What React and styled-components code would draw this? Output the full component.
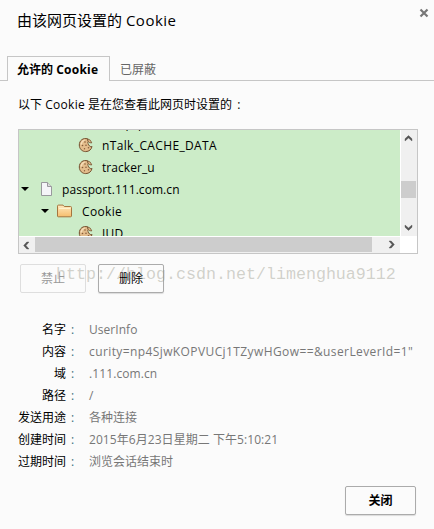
import React from 'react';
import styled, { createGlobalStyle } from 'styled-components';

const GlobalStyle = createGlobalStyle`
  * { box-sizing: border-box; }
  body {
    margin: 0;
    background: #fbfbfb;
    color: #000;
    font: 12px/22px "Open Sans", "Noto Sans CJK SC", sans-serif;
  }
`;

const Dialog = styled.main`
  position: relative;
  width: 434px;
  height: 529px;
  overflow: hidden;
  background: #fbfbfb;
  display: flex;
  flex-direction: column;
`;

const Header = styled.header`
  display: flex;
  justify-content: space-between;
  height: 56px;
  padding: 8px 5px 0 17px;
`;

const Title = styled.h1`
  margin: 0;
  font-size: 15px;
  font-weight: 400;
  line-height: 25px;
  white-space: pre;
`;

const CloseIcon = styled.button`
  width: 10px;
  height: 10px;
  padding: 0;
  border: 0;
  background: none;
  svg { display: block; }
`;

const Tabs = styled.nav`
  display: flex;
  height: 25px;
  padding-left: 7px;
  box-shadow: inset 0 -1px #c6c6c6;
`;

const Tab = styled.button`
  width: ${p => (p.$active ? 103 : 60)}px;
  height: 25px;
  padding: 2px 0 0 ${p => (p.$active ? 9 : 10)}px;
  border: ${p => (p.$active ? '1px solid #c6c6c6' : '0')};
  border-bottom: 0;
  background: ${p => (p.$active ? '#fbfbfb' : 'transparent')};
  color: ${p => (p.$active ? '#000' : '#666')};
  font: ${p => (p.$active ? 700 : 400)} 12px/22px "Open Sans", "Noto Sans CJK SC", sans-serif;
  text-align: left;
  white-space: nowrap;
`;

const Latin = styled.span`
  letter-spacing: ${p => p.$gap || 0}px;
`;

const Intro = styled.p`
  margin: 13px 0 0 18px;
  height: 35px;
  white-space: nowrap;
`;

const Colon = styled.span`
  margin-left: 2px;
`;

const TreeFrame = styled.section`
  display: grid;
  grid-template: 107px 16px / 382px 16px;
  width: 400px;
  height: 125px;
  margin-left: 18px;
  border: 1px solid #c6c6c6;
  background: #fff;
`;

const Tree = styled.div`
  width: 381px;
  height: 106px;
  overflow: hidden;
  background: #ccecc8;
`;

const TreeList = styled.div`
  margin-top: -17px;
`;

const TreeRow = styled.div`
  display: flex;
  align-items: center;
  height: 22px;
  padding-left: ${p => p.$indent}px;
  white-space: nowrap;
`;

const Arrow = styled.i`
  width: 0;
  margin: -2px ${p => p.$space}px 0 0;
  border: 4px solid transparent;
  border-top-color: #000;
  border-bottom: 0;
`;

const IconSlot = styled.span`
  width: 16px;
  height: 16px;
  margin: -2px ${p => p.$space}px 0 0;
  svg { display: block; }
`;

const VerticalBar = styled.div`
  display: flex;
  flex-direction: column;
  justify-content: space-between;
  height: 106px;
  background: #f0f0f0;
`;

const HorizontalBar = styled.div`
  display: flex;
  justify-content: space-between;
  width: 381px;
  background: #f0f0f0;
`;

const VerticalThumb = styled.div`
  width: 15px;
  height: 17px;
  margin-top: 12px;
  background: #cdcdcd;
`;

const HorizontalThumb = styled.div`
  width: 337px;
  height: 15px;
  margin-right: 11px;
  background: #cdcdcd;
`;

const ScrollButton = styled.span`
  display: block;
  width: 16px;
  height: 16px;
  margin-left: ${p => p.$shift || 0}px;
  svg { display: block; transform: rotate(${p => p.$turn}deg); }
`;

const Actions = styled.div`
  display: flex;
  gap: 12px;
  margin: 10px 0 0 20px;
`;

const Button = styled.button`
  width: ${p => p.$width || 66}px;
  height: 29px;
  padding: 0 0 1px;
  border: 1px solid ${p => (p.disabled ? '#dedede' : '#ababab')};
  border-radius: 2px;
  background: #fbfbfb;
  box-shadow: ${p => (p.disabled ? 'none' : '0 1px 1px rgba(0,0,0,.13)')};
  color: ${p => (p.disabled ? '#999' : '#000')};
  font: ${p => (p.$strong ? 700 : 400)} 12px/20px "Noto Sans CJK SC", sans-serif;
`;

const Details = styled.dl`
  display: grid;
  grid-template-columns: 56px 1fr;
  grid-auto-rows: 22px;
  column-gap: 15px;
  margin: 26px 0 0 18px;
`;

const Name = styled.dt`
  display: flex;
  justify-content: flex-end;
  white-space: nowrap;
  span { width: 8px; padding-left: 5px; color: #3c6f80; }
`;

const Value = styled.dd`
  margin: 0;
  color: #777;
  letter-spacing: ${p => p.$gap || 0}px;
  white-space: nowrap;
`;

const Footer = styled.footer`
  display: flex;
  justify-content: flex-end;
  padding: 13px 18px 0 0;
`;

const Watermark = styled.div`
  position: absolute;
  left: 56px;
  top: 264px;
  color: rgba(150, 150, 135, .42);
  font: 16.67px/22px "Liberation Mono", monospace;
  pointer-events: none;
  white-space: nowrap;
`;

const Chevron = () => (
  <svg width="16" height="16" viewBox="0 0 16 16">
    <path d="M4 8.8 7.5 5.6 11 8.8V11L7.5 8 4 11Z" fill="#555" stroke="#555" strokeWidth=".4" />
  </svg>
);

const CookieIcon = () => (
  <svg width="16" height="16" viewBox="0 0 16 16">
    <path d="M9.6 1.9C5.2.4 1.3 3.5 1.3 8c0 4 3 6.6 6.4 6.6 3.4 0 5.9-2.3 6.3-5.2-1 .6-2.1.3-2.4-.7-.9-.1-1.4-.7-1.1-1.7-1.1-.5-.9-1.7-.1-2.2Z" fill="#e3bd8c" stroke="#74502f" />
    <path d="m9.5 1.8 2.8 1.4 1.5 2.7-2-.2-1.7-1.2Z" fill="#e3bd8c" stroke="#74502f" strokeWidth=".8" />
    <path d="M3.2 7.5c.2-2.3 1.5-3.9 3.5-4.5" fill="none" stroke="#f7dfba" strokeWidth="1.3" />
    <g fill="#875c3a">
      <circle cx="7" cy="5" r=".8" /><circle cx="4.5" cy="8.5" r=".8" />
      <circle cx="8" cy="8.2" r=".8" /><circle cx="6.5" cy="11.8" r=".7" /><circle cx="10.5" cy="10.8" r=".8" />
    </g>
  </svg>
);

const PageIcon = () => (
  <svg width="16" height="16" viewBox="0 0 16 16">
    <path d="M.5 1.5h6l4 4v9H.5Z" fill="#f5f5f8" stroke="#99999d" />
    <path d="M6.5 1.5v4h4" fill="#ddd" stroke="#99999d" />
  </svg>
);

const FolderIcon = () => (
  <svg width="16" height="16" viewBox="0 0 16 16">
    <defs>
      <linearGradient id="folder" x2="0" y2="1">
        <stop stopColor="#ffe9bf" /><stop offset="1" stopColor="#f6bd6c" />
      </linearGradient>
    </defs>
    <path d="M.5 13V3.1q0-1 1-1H6l1.3 1.4h6.2q1 0 1 1V13q0 .8-1 .8H1.3q-.8 0-.8-.8Z" fill="url(#folder)" stroke="#a5763f" />
    <path d="M2 5.5h11.5" stroke="#fff2cc" />
  </svg>
);

const CookieEntry = ({ gap, children }) => (
  <TreeRow $indent={59}>
    <IconSlot $space={8}><CookieIcon /></IconSlot>
    <Latin $gap={gap}>{children}</Latin>
  </TreeRow>
);

const fields = [
  ['名字', 'UserInfo', 0.05],
  ['内容', 'curity=np4SjwKOPVUCj1TZywHGow==&userLeverId=1"', 0.4],
  ['域', '.111.com.cn', 0.1],
  ['路径', '/'],
  ['发送用途', '各种连接'],
  ['创建时间', '2015年6月23日星期二 下午5:10:21', 0.06],
  ['过期时间', '浏览会话结束时'],
];

export default function App() {
  return (
    <>
      <GlobalStyle />
      <Dialog>
        <Header>
          <Title>由该网页设置的 <Latin $gap={0.5}>Cookie</Latin></Title>
          <CloseIcon aria-label="关闭">
            <svg width="10" height="10" viewBox="0 0 10 10">
              <path d="m1.5 1.5 7 7M8.5 1.5l-7 7" stroke="#777" strokeWidth="2.2" />
            </svg>
          </CloseIcon>
        </Header>
        <Tabs>
          <Tab $active>允许的 <Latin $gap={0.25}>Cookie</Latin></Tab>
          <Tab>已屏蔽</Tab>
        </Tabs>
        <Intro>以下 <Latin $gap={0.3}>Cookie</Latin> 是在您查看此网页时设置的<Colon> :</Colon></Intro>
        <TreeFrame>
          <Tree>
            <TreeList>
              <CookieEntry>webp_p</CookieEntry>
              <CookieEntry gap={0.36}>nTalk_CACHE_DATA</CookieEntry>
              <CookieEntry gap={0.05}>tracker_u</CookieEntry>
              <TreeRow $indent={2}>
                <Arrow $space={12} />
                <IconSlot $space={5}><PageIcon /></IconSlot>
                <Latin $gap={0.06}>passport.111.com.cn</Latin>
              </TreeRow>
              <TreeRow $indent={22}>
                <Arrow $space={8} />
                <IconSlot $space={9}><FolderIcon /></IconSlot>
                <Latin $gap={0.35}>Cookie</Latin>
              </TreeRow>
              <CookieEntry gap={0.3}>JUD</CookieEntry>
            </TreeList>
          </Tree>
          <VerticalBar>
            <ScrollButton $turn={0}><Chevron /></ScrollButton>
            <VerticalThumb />
            <ScrollButton $turn={180} $shift={-1}><Chevron /></ScrollButton>
          </VerticalBar>
          <HorizontalBar>
            <ScrollButton $turn={-90} $shift={-1}><Chevron /></ScrollButton>
            <HorizontalThumb />
            <ScrollButton $turn={90}><Chevron /></ScrollButton>
          </HorizontalBar>
        </TreeFrame>
        <Actions>
          <Button disabled>禁止</Button>
          <Button>删除</Button>
        </Actions>
        <Details>
          {fields.map(([name, value, gap]) => (
            <React.Fragment key={name}>
              <Name>{name}<span>:</span></Name>
              <Value $gap={gap}>{value}</Value>
            </React.Fragment>
          ))}
        </Details>
        <Footer><Button $width={71} $strong>关闭</Button></Footer>
        <Watermark>http://blog.csdn.net/limenghua9112</Watermark>
      </Dialog>
    </>
  );
}
